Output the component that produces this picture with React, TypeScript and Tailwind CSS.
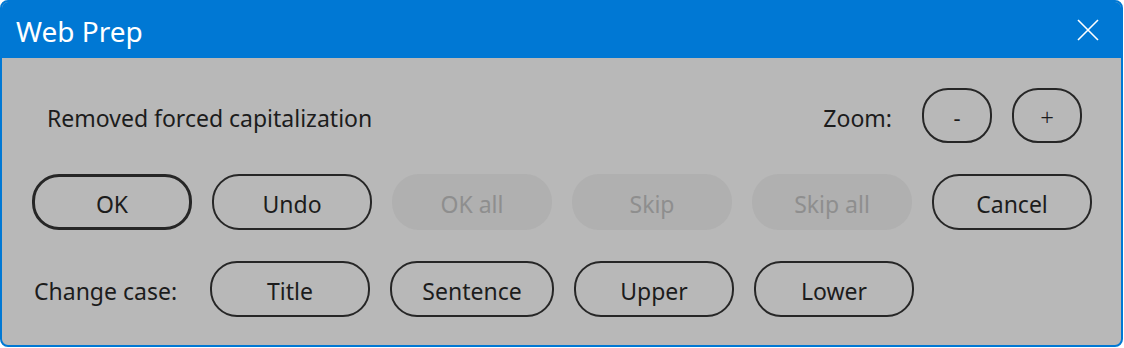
import React from "react";

const font = { fontFamily: '"Segoe UI", "Noto Sans", "Open Sans", sans-serif' };

function Btn({
  label,
  width = "w-[160px]",
  disabled,
  primary,
}: {
  label: string;
  width?: string;
  disabled?: boolean;
  primary?: boolean;
}) {
  if (disabled) {
    return (
      <button
        type="button"
        disabled
        className={`${width} h-[56px] shrink-0 rounded-[27px] bg-[#b0b0b0] pt-[4px] text-[23px] leading-none text-[#8e8e8e]`}
      >
        {label}
      </button>
    );
  }
  return (
    <button
      type="button"
      className={`${width} h-[56px] shrink-0 rounded-[27px] ${
        primary ? "border-[3px]" : "border-2"
      } border-[#262626] pt-[4px] text-[23px] leading-none text-[#1c1c1c]`}
    >
      {label}
    </button>
  );
}

export default function App() {
  return (
    <div className="h-[348px] w-[1124px] bg-white" style={font}>
      <div className="flex h-[347px] w-[1123px] flex-col overflow-hidden rounded-[8px] border-2 border-[#0078d4] bg-[#b8b8b8]">
        <div className="flex h-[56px] shrink-0 items-center justify-between bg-[#0078d4] pl-[14px] pr-[22px]">
          <span className="pt-[2px] text-[28px] leading-none text-white">Web Prep</span>
          <svg width="22" height="22" viewBox="0 0 22 22" className="text-white">
            <path d="M1 1 L21 21 M21 1 L1 21" stroke="currentColor" strokeWidth="1.6" />
          </svg>
        </div>

        <div className="flex flex-col pt-[30px]">
          <div className="flex h-[55px] items-center pl-[45px] pr-[39px]">
            <span className="pt-[6px] text-[23px] leading-none text-[#1c1c1c]">Removed forced capitalization</span>
            <span className="ml-auto mr-[30px] pt-[6px] text-[23px] leading-none text-[#1c1c1c]">Zoom:</span>
            <div className="flex gap-[20px]">
              <button type="button" className="h-[55px] w-[70px] rounded-[26px] border-2 border-[#262626] pt-[3px] text-[22px] leading-none text-[#1c1c1c]">
                -
              </button>
              <button type="button" className="h-[55px] w-[70px] rounded-[26px] border-2 border-[#262626] pt-[3px] text-[24px] font-light leading-none text-[#1c1c1c]">
                +
              </button>
            </div>
          </div>

          <div className="mt-[31px] flex gap-[20px] pl-[30px]">
            <Btn label="OK" primary />
            <Btn label="Undo" />
            <Btn label="OK all" disabled />
            <Btn label="Skip" disabled />
            <Btn label="Skip all" disabled />
            <Btn label="Cancel" />
          </div>

          <div className="mt-[31px] flex items-center gap-[20px] pl-[32px]">
            <span className="w-[156px] shrink-0 pt-[5px] text-[23px] leading-none text-[#1c1c1c]">Change case:</span>
            <Btn label="Title" />
            <Btn label="Sentence" width="w-[164px]" />
            <Btn label="Upper" />
            <Btn label="Lower" />
          </div>
        </div>
      </div>
    </div>
  );
}
